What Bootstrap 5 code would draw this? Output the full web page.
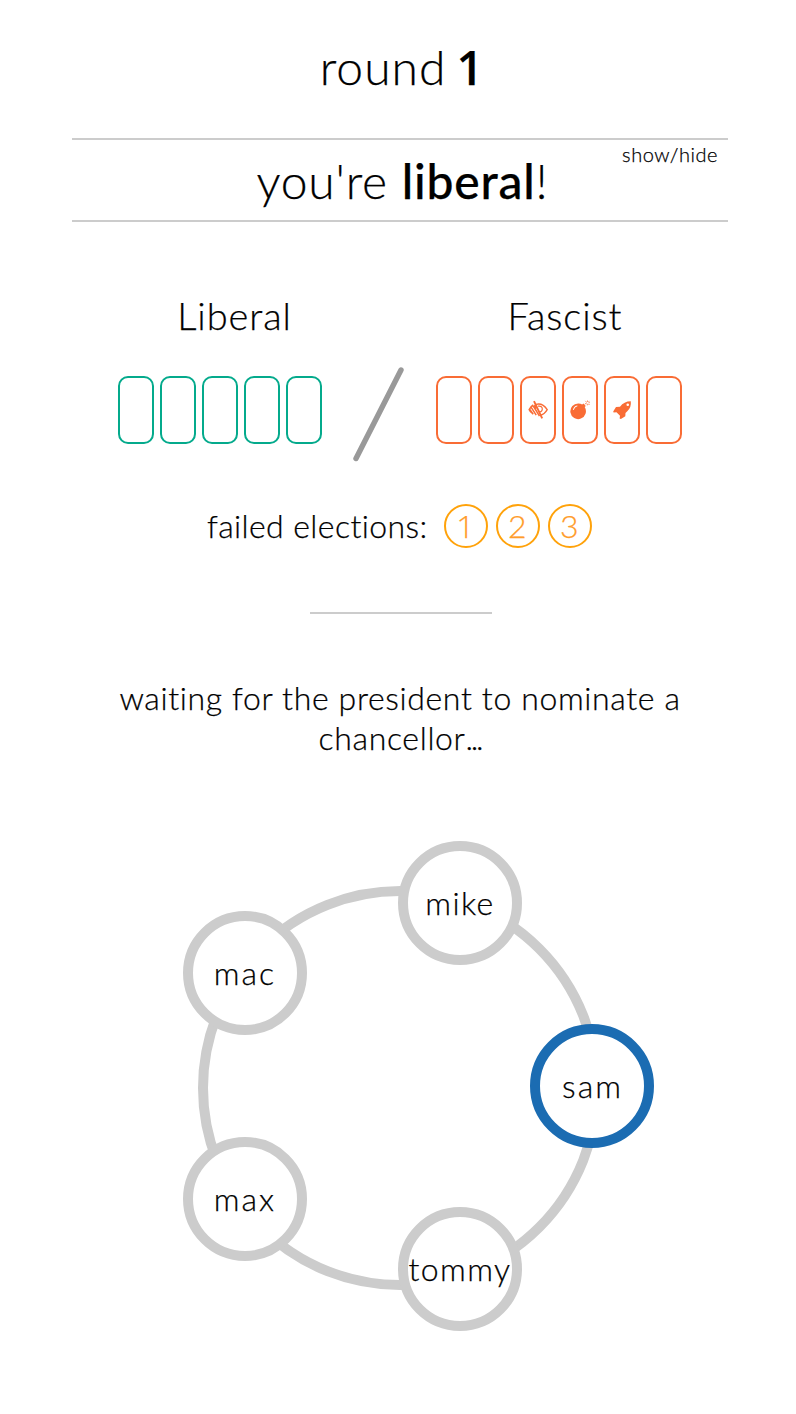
<!DOCTYPE html>
<html lang="en">
<head>
<meta charset="utf-8">
<meta name="viewport" content="width=device-width, initial-scale=1">
<title>round 1</title>
<link rel="stylesheet" href="https://cdn.jsdelivr.net/npm/bootstrap@5.3.0/dist/css/bootstrap.min.css">
<style>
body{font-family:Lato,sans-serif;font-weight:300;color:#000;background:#fff;font-size:32px;line-height:40px;overflow:hidden;-webkit-text-stroke:.25px currentColor}
.game{width:656px;margin-left:72px;height:1414px}
.round-title{font-size:48px;line-height:60px;padding:37px 0 0 4px;height:138px;letter-spacing:1px;word-spacing:-4px}
.round-title b{font-family:"Open Sans",sans-serif;font-weight:600;font-size:47px;line-height:1}
.role-bar{border-top:2px solid #ccc;border-bottom:2px solid #ccc;height:84px;font-size:48px;line-height:60px;padding:11px 0 0 5px;letter-spacing:.8px}
b{font-weight:500}
.toggle{font-size:20px;line-height:24px;top:2px;right:10px;letter-spacing:.55px}
.tracks{padding:69px 0 0 46px;height:239px}
.track-name{font-size:38px;line-height:48px;margin-bottom:37px;letter-spacing:.9px}
.lib .track-name{padding-left:29px}
.fas .track-name{padding-left:12px}
.policies{gap:6px}
.slot{width:36px;height:68px;border:2px solid #04aa8c;border-radius:10px}
.fas .slot{border-color:#f96c35;color:#f96c35}
.slot svg{width:20px;height:20px;flex:none}
.slash{width:52px;height:96px;margin:76px 32px 0 30px}
.failed{height:44px;margin-top:43px;padding-left:135px;letter-spacing:.4px}
.ticks{gap:8px;margin-left:16px}
.tick{width:44px;height:44px;border:2px solid #ffa20a;color:#ff9c2a}
.tick.first{font-family:"Open Sans",sans-serif}
.divider{width:182px;height:2px;background:#ccc;margin:64px 0 0 238px}
.status{margin-top:64px;letter-spacing:.64px}
.ellipsis{letter-spacing:-2.2px}
.table-ring{width:404px;height:404px;border:10px solid #ccc;margin:128px 0 0 126px}
.player{width:124px;height:124px;border:10px solid #ccc;background:#fff;white-space:nowrap;letter-spacing:1.4px;padding-left:1px}
.wide{letter-spacing:2px}
.president{border-color:#1b6cb2}
</style>
</head>
<body>
<main class="game">
  <h1 class="round-title text-center fw-light mb-0">round <b>1</b></h1>
  <section class="role-bar position-relative text-center">you're <b>liberal</b>!<span class="toggle position-absolute">show/hide</span></section>
  <section class="tracks d-flex">
    <div class="lib">
      <div class="track-name text-center">Liberal</div>
      <div class="policies d-flex"><div class="slot"></div><div class="slot"></div><div class="slot"></div><div class="slot"></div><div class="slot"></div></div>
    </div>
    <svg class="slash flex-shrink-0" viewBox="0 0 52 96"><path d="M4 91.5 49 3" stroke="#999" stroke-width="5.400" stroke-linecap="round"/></svg>
    <div class="fas">
      <div class="track-name text-center">Fascist</div>
      <div class="policies d-flex">
        <div class="slot"></div>
        <div class="slot"></div>
        <div class="slot d-flex align-items-center justify-content-center">
          <svg viewBox="0 0 20 20" fill="none" stroke="currentColor" stroke-width="1.4"><path d="M8 4.300Q14.500 2.500 19.200 9.600Q16.500 14.400 12 15.400"/><path d="M10 6.200q4.500-.6 4.300 3-.2 2.500-2.600 2.800" stroke-width="1.200"/><path d="M6 1.200 14.200 18.300" stroke-width="1.900"/><path d="M5.300 5Q2.500 6.500 1.200 9.600 2.300 12 4.500 13.500M3.200 7.400l5 7.700M5.300 6l6.200 10.200M1.800 9.500l3.400 4.800M6.600 4.800l1.800 3.700" stroke-width="1.500"/></svg>
        </div>
        <div class="slot d-flex align-items-center justify-content-center">
          <svg viewBox="0 0 20 20"><path fill="currentColor" fill-rule="evenodd" d="M8.500 3.500q2 0 3.700 1.100l1.200-1.100 2.400 2.400-1.100 1.200a7.800 7.800 0 1 1-6.200-3.600ZM3 9.900q.3.400.7 0 .9-2.800 3.600-3.600.5-.5-.2-.8Q3.600 6.400 3 9.900Z"/><path d="m14.800 4.500 1.400-1.500.8-.3M17.500.5v1.400M15.300.9l.9.9M19.500.9l-.9.900M18.500 2.700h1.300M18.300 3.800l1.200 1.200M17.300 3.900v1.400" fill="none" stroke="currentColor" stroke-width=".8"/></svg>
        </div>
        <div class="slot d-flex align-items-center justify-content-center">
          <svg viewBox="0 0 20 20"><path fill="currentColor" fill-rule="evenodd" d="M18.800 1.200Q19.500 7 15.500 11L13.500 13 13.300 16.300 8.900 18.900 7.600 18.400 8 15.800 4.500 12.300 1.600 12.500 1.200 11.400 4 7 8 6.700Q12 1.200 18.800 1.200ZM15.700 3.500a1.300 1.300 0 1 0 .1 2.600 1.300 1.300 0 0 0-.1-2.600Z"/></svg>
        </div>
        <div class="slot"></div>
      </div>
    </div>
  </section>
  <section class="failed d-flex align-items-center">
    <span>failed elections:</span>
    <div class="ticks d-flex">
      <div class="tick first rounded-circle d-flex align-items-center justify-content-center">1</div>
      <div class="tick rounded-circle d-flex align-items-center justify-content-center">2</div>
      <div class="tick rounded-circle d-flex align-items-center justify-content-center">3</div>
    </div>
  </section>
  <div class="divider"></div>
  <p class="status text-center mb-0">waiting for the president to nominate a<br>chancellor<span class="ellipsis">...</span></p>
  <div class="table-ring rounded-circle position-relative">
    <div class="player rounded-circle position-absolute d-flex align-items-center justify-content-center" style="left:189.5px;top:-55px">mike</div>
    <div class="player president rounded-circle position-absolute d-flex align-items-center justify-content-center wide" style="left:322px;top:128px">sam</div>
    <div class="player rounded-circle position-absolute d-flex align-items-center justify-content-center" style="left:189.5px;top:310.5px">tommy</div>
    <div class="player rounded-circle position-absolute d-flex align-items-center justify-content-center wide" style="left:-25.5px;top:240.5px">max</div>
    <div class="player rounded-circle position-absolute d-flex align-items-center justify-content-center wide" style="left:-25.5px;top:15px">mac</div>
  </div>
</main>
<script src="https://cdn.jsdelivr.net/npm/bootstrap@5.3.0/dist/js/bootstrap.bundle.min.js"></script>
</body>
</html>
